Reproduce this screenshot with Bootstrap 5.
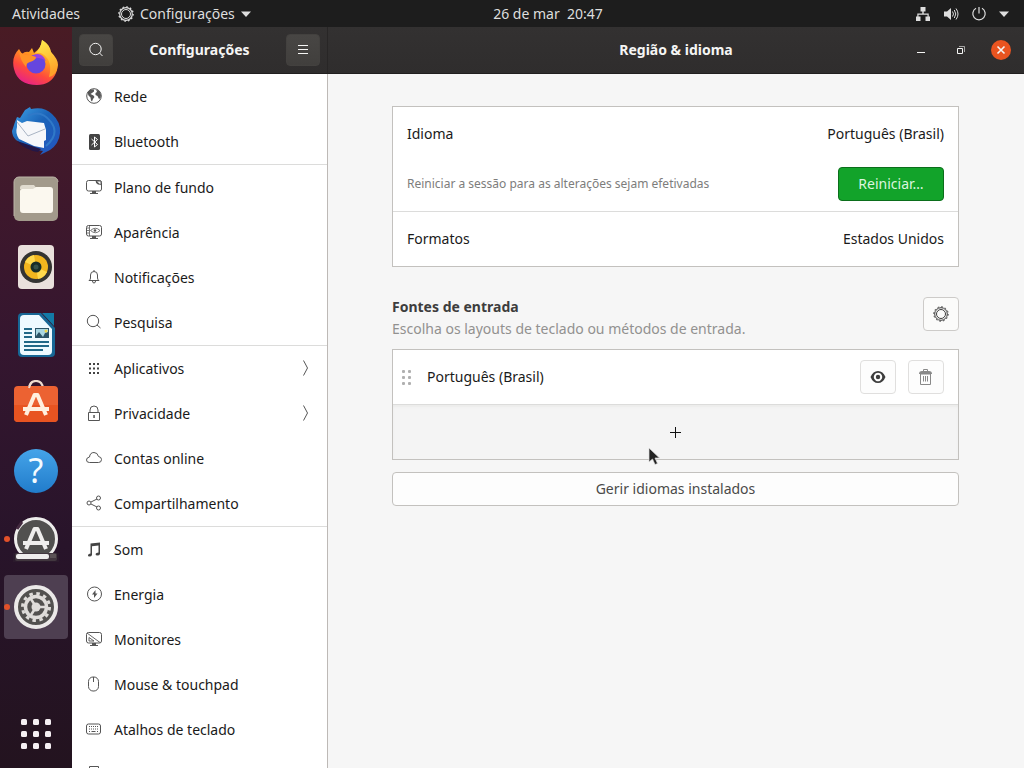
<!DOCTYPE html>
<html lang="pt-BR">
<head>
<meta charset="utf-8">
<meta name="viewport" content="width=device-width, initial-scale=1">
<title>Configurações</title>
<link href="https://cdn.jsdelivr.net/npm/bootstrap@5.3.0/dist/css/bootstrap.min.css" rel="stylesheet">
<style>
body{font-family:"Noto Sans","Open Sans",sans-serif;font-size:14px;line-height:20px;color:#1a1a1a;background:#f6f6f6}
button{color:inherit;font:inherit}
svg{display:block;flex:none}
.sym{fill:none;stroke:currentColor;stroke-width:1}
.topbar{display:grid;grid-template-columns:72px 1fr auto 1fr;height:27px;background:#1d1d1d;color:#dedede;white-space:nowrap}
.topbar button{display:flex;align-items:center;background:none;border:0;padding:0}
.activities{margin-left:12px}
.appmenu{margin-left:46px;gap:6px}
.topbar .tray{gap:12px;padding-right:15px}
.dock{width:72px;background:linear-gradient(#491b24 0,#43192a 14%,#35162f 42%,#28142a 70%,#23131f 100%);gap:4px;padding:4px 0 2px}
.dock button{position:relative;width:64px;height:64px;padding:0;border:0;background:none;border-radius:4px;display:grid;place-items:center}
.dock button.current{background:#4e3f51}
.running::before{content:"";position:absolute;left:0;top:29px;width:6px;height:6px;border-radius:50%;background:#e2512a}
.settings-side{width:256px}
.side-list{border-right:1px solid #bdb9b6}
.titlebar{height:47px;background:linear-gradient(#333131,#2f2d2d);border-bottom:1px solid #211f1f;color:#f5f5f4;font-weight:700}
.titlebar h1,.titlebar h2{font-size:14px;line-height:20px;font-weight:700;margin:0}
.side-title{border-right:1px solid #282626;padding:0 7px}
.hbtn{width:34px;height:32px;border:1px solid #43413f;border-radius:4px;background:linear-gradient(#484644,#413f3d);display:grid;place-items:center;padding:0}
.main-title{display:grid;grid-template-columns:1fr auto 1fr;padding:0 13px}
.winbtn{border:0;background:none;width:20px;height:20px;padding:0;display:grid;place-items:center}
.closebtn{background:#e95420;border-radius:50%}
.menu-group{border-bottom:1px solid #dcdcdb}
.menu-group a{display:flex;align-items:center;height:45px;padding:0 13px 0 14px;gap:12px;color:#1a1a1a;text-decoration:none}
.menu-group .sym{color:#555;margin-bottom:1px}
.page{padding:32px 65px 0 64px}
.panel{border:1px solid #c3c1be;background:#fff}
.line{height:54px;padding:0 14px}
.restart{padding:6px 14px 10px;color:#7d7d7c;font-size:12px}
.btn-restart{width:106px;height:34px;background:#12a32a;border:1px solid #0b6e1b;border-radius:4px;color:#dcf5df;font-size:14px}
.rule{border-top:1px solid #dcdcdb}
.section-head{margin-top:30px;height:52px}
.section-head h3{font-size:14px;line-height:20px;font-weight:700;color:#3d3d3d;margin:0 0 2px}
.section-head p{color:#929190;margin:0}
.ibtn{width:36px;height:34px;border:1px solid #cdcbc9;border-radius:4px;background:#fbfbfa;color:#3d3d3d;display:grid;place-items:center;padding:0}
.source .ibtn{border-color:#e0dfde;background:#fdfdfd}
.source{height:54px;padding:0 14px 0 8px}
.addsource{width:100%;height:55px;background:#f4f4f4;border:0;border-top:1px solid #dcdcdb;box-shadow:inset 0 2px 2px #ececeb;display:grid;place-items:center;padding:0;color:#111}
.pointer{position:absolute;left:calc(50% - 28px);top:97px;pointer-events:none}
.manage{margin-top:12px;height:34px;border:1px solid #c3c1be;border-radius:4px;background:#fdfdfd;color:#4a4a49;padding:0;width:100%}
</style>
</head>
<body>
<div class="vh-100 d-flex flex-column overflow-hidden">
  <header class="topbar flex-shrink-0">
    <button class="activities">Atividades</button>
    <button class="appmenu">
      <svg class="sym" width="16" height="16" viewBox="0 0 16 16"><circle cx="8" cy="8" r="6.300" stroke-width="1.200"/><circle cx="8" cy="8" r="4.500"/><circle cx="8" cy="8" r="7.200" stroke-width="1.200" stroke-dasharray="1.700 2.070"/></svg>
      Configurações
      <svg width="10" height="6" viewBox="0 0 10 6"><path d="M0 .5h10L5 6z" fill="currentColor"/></svg>
    </button>
    <button>26 de mar&nbsp; 20:47</button>
    <button class="tray justify-content-end" aria-label="Sistema">
      <svg width="16" height="16" viewBox="0 0 16 16"><path d="M5.500 1h5v4.500H8.700v2h5v3H15V15h-4.500v-4.500h2V8.700h-9v1.800h2V15H1v-4.500h1.300v-3h5v-2H5.500z" fill="currentColor"/></svg>
      <svg width="16" height="16" viewBox="0 0 16 16"><path d="M1 5.500h3L8 2v12L4 10.500H1z" fill="currentColor"/><path d="M9.500 5.500q2 2.500 0 5M11.300 4q3 4 0 8M13 2.500q4 5.500 0 11" class="sym"/></svg>
      <svg class="sym" width="16" height="16" viewBox="0 0 16 16"><path d="M5 2.300a6.200 6.200 0 1 0 6 0M8 1v6.500" stroke-width="1.200"/></svg>
      <svg width="10" height="6" viewBox="0 0 10 6"><path d="M0 .5h10L5 6z" fill="currentColor"/></svg>
    </button>
  </header>
  <div class="d-flex flex-grow-1" style="min-height:0">
    <nav class="dock d-flex flex-column align-items-center flex-shrink-0" aria-label="Dock">
      <button aria-label="Firefox"><svg width="48" height="48" viewBox="0 0 48 48"><defs><linearGradient id="ff" x1=".8" y1="0" x2=".3" y2="1"><stop offset="0" stop-color="#ffe14a"/><stop offset=".4" stop-color="#ff9a1f"/><stop offset=".7" stop-color="#ff4a3c"/><stop offset="1" stop-color="#e5208b"/></linearGradient><linearGradient id="fy" x1="0" y1="0" x2=".3" y2="1"><stop offset="0" stop-color="#fff04f"/><stop offset="1" stop-color="#ffa229"/></linearGradient></defs><path d="M7 10l3 5q3-3 7-2l3-4 2 5q4-3 6-6 2-4 2-7 7 4 8 10l2 4q8 10 4 19-5 12-19 12Q6 46 2 30-1 18 7 10z" fill="url(#ff)"/><path d="M30 1q8 5 9 12 7 7 7 13-1 10-9 12Q41 23 32 16q-5-4-9-1 6-6 7-14z" fill="url(#fy)"/><circle cx="24" cy="25" r="9.500" fill="#6546df"/><path d="M20 17q9-6 14 5-6-5-12-2z" fill="#9a42e0"/><path d="M7 12q5 5 11 4l6 2q0 3-6 5-4 1-4 5-6-7-7-16z" fill="#ff9227"/></svg></button>
      <button aria-label="Thunderbird"><svg width="50" height="50" viewBox="0 0 50 50"><defs><linearGradient id="tb" x1="0" y1="0" x2="1" y2="1"><stop offset="0" stop-color="#3fa4e8"/><stop offset=".45" stop-color="#1b63b8"/><stop offset="1" stop-color="#2454c0"/></linearGradient></defs><path d="M14 4l5-3 1 2q13-3 21 5 9 8 8 19-1 11-10 17l-10 5 3-4-12-2L5 34Q1 30 1 25l2-6 1-3 2-5 3 1z" fill="url(#tb)"/><path d="M17 10q13-7 23 6 9 12-5 24" fill="none" stroke="#3079c8" stroke-width="2"/><path d="M6 14l5 3 5-2 17 2 2 7v10l-2 1v7l-10-2-15-7q-4-6-2-12z" fill="#f6f7fa"/><path d="M6 16l11 14 17-7" fill="none" stroke="#a9b4c4"/><path d="M6 35l24 8-3 3Q14 44 6 35z" fill="#241747"/></svg></button>
      <button aria-label="Arquivos"><svg width="46" height="46" viewBox="0 0 46 46"><rect x="1" y="1" width="44" height="44" rx="5" fill="#a29a8b"/><path d="M1 40V6a5 5 0 0 1 5-5h34a5 5 0 0 1 5 5" fill="none" stroke="#bbb4a7"/><path d="M7 12q0-3 3-3h11l3 4H7z" fill="#e0dbcf"/><path d="M7 15q0-2 2-2h11l3-2h14q3 0 3 3v20q0 3-3 3H10q-3 0-3-3z" fill="#fbf8ef"/></svg></button>
      <button aria-label="Rhythmbox"><svg width="46" height="46" viewBox="0 0 46 46"><rect x="5" y="1" width="36" height="44" rx="4" fill="#e9e0dc"/><circle cx="23" cy="23" r="16" fill="#343432"/><circle cx="23" cy="23" r="12" fill="#f2b61e"/><path d="M23 23L12 18q3-6 9-7zM23 23l11 5q-3 6-9 7z" fill="#ffd94d"/><circle cx="23" cy="23" r="5.500" fill="#182d28"/><circle cx="23" cy="23" r="2.500" fill="#35514a"/></svg></button>
      <button aria-label="LibreOffice Writer"><svg width="46" height="46" viewBox="0 0 46 46"><path d="M9 1h19l14 15v25a4 4 0 0 1-4 4H9a4 4 0 0 1-4-4V5a4 4 0 0 1 4-4z" fill="#176795"/><path d="M11 3h15l13 14v22a4 4 0 0 1-4 4H11a4 4 0 0 1-4-4V7a4 4 0 0 1 4-4z" fill="#eefaff"/><path d="M29 1h12v13z" fill="#137ba7"/><path d="M11 17h8M11 21h8M11 25h8M11 30h25M11 34h25M11 38h19" stroke="#216887" stroke-width="2"/><path d="M22 16h14v10H22z" fill="#2b5366"/><path d="M23 17h12v3l-3 1-2 4-4-5-3 4z" fill="#a8d6e2"/><circle cx="33" cy="19" r="1.500" fill="#f0d447"/></svg></button>
      <button aria-label="Ubuntu Software"><svg width="46" height="46" viewBox="0 0 46 46"><path d="M16 8q1-7 7-7t7 7" fill="none" stroke="#efdccf" stroke-width="2.200"/><rect x="1" y="6" width="44" height="36" rx="4" fill="#ec6232"/><path d="M1 25h44v13a4 4 0 0 1-4 4H5a4 4 0 0 1-4-4z" fill="#e85421"/><path d="M16 8q1-4 3-6" fill="none" stroke="#efdccf" stroke-width="2"/><path d="M13 35l8.500-20h3L33 35M10 29h26" fill="none" stroke="#fff0df" stroke-width="4" stroke-linejoin="round"/></svg></button>
      <button aria-label="Ajuda"><svg width="46" height="46" viewBox="0 0 46 46"><defs><linearGradient id="hp" x2="0" y2="1"><stop stop-color="#45a4e9"/><stop offset="1" stop-color="#217ccb"/></linearGradient></defs><circle cx="23" cy="23" r="22" fill="url(#hp)"/><text x="23" y="35" text-anchor="middle" font-size="34" fill="#f4fbff">?</text></svg></button>
      <button class="running" aria-label="Atualizador"><svg width="46" height="46" viewBox="0 0 46 46"><circle cx="23" cy="23" r="20.500" fill="#51504f" stroke="#eeedec" stroke-width="3"/><path d="M4 13l5-7" stroke="#43293f" stroke-width="3"/><path d="M13 33l8.500-20h3L33 33M10 27h26" fill="none" stroke="#efeeed" stroke-width="4" stroke-linejoin="round"/><rect x="0" y="37" width="46" height="9" fill="#2b1a2c"/><rect x="2" y="37" width="42" height="8" rx="2" fill="#42373f"/><rect x="3" y="38" width="33" height="5" rx="2" fill="#eeedec"/><path d="M37 38h6v4h-6z" fill="#5b5256"/></svg></button>
      <button class="running current" aria-label="Configurações"><svg width="46" height="46" viewBox="0 0 46 46"><circle cx="23" cy="23" r="20" fill="#52514f" stroke="#ebe9e8" stroke-width="4"/><g fill="none" stroke="#dedcd9"><circle cx="23" cy="23" r="10.500" stroke-width="3.500"/><circle cx="23" cy="23" r="13.500" stroke-width="3" stroke-dasharray="3.500 3.560"/><path d="M23 23h9M23 23l-5-8M23 23l-5 8" stroke-width="2.500"/></g><circle cx="23" cy="23" r="4.500" fill="#dedcd9"/></svg></button>
      <button class="mt-auto" aria-label="Mostrar aplicativos"><svg width="30" height="30" viewBox="0 0 30 30" fill="#f5eff3"><g id="dots"><rect width="6" height="6" rx="1.500"/><rect x="12" width="6" height="6" rx="1.500"/><rect x="24" width="6" height="6" rx="1.500"/></g><use href="#dots" y="12"/><use href="#dots" y="24"/></svg></button>
    </nav>
    <aside class="settings-side d-flex flex-column flex-shrink-0 bg-white">
      <div class="titlebar side-title d-flex align-items-center justify-content-between flex-shrink-0">
        <button class="hbtn" aria-label="Pesquisar"><svg class="sym" width="16" height="16" viewBox="0 0 16 16"><circle cx="7.500" cy="7" r="5.700"/><path d="M11.500 11l3 3"/></svg></button>
        <h1>Configurações</h1>
        <button class="hbtn" aria-label="Menu"><svg class="sym" width="16" height="16" viewBox="0 0 16 16"><path d="M3 3.500h10M3 7.500h10M3 11.500h10"/></svg></button>
      </div>
      <nav class="side-list overflow-hidden flex-grow-1" aria-label="Painéis">
        <div class="menu-group">
          <a href="#"><svg class="sym" width="16" height="16" viewBox="0 0 16 16"><circle cx="8" cy="8" r="7.300"/><path d="M1.500 4.500l3-3 3.500 0 0 2-2 1.500-1.500 1 3 1.500 1 1.500-1.500 2-1 2.500-1-1-.5-3-2-2zM10 1.500l3.500 1.500 1.500 4-.5 3-1.500 1-1.500-3-2-1 0-2 1.500-1z" fill="currentColor" stroke="none"/></svg>Rede</a>
          <a href="#"><svg width="16" height="16" viewBox="0 0 16 16"><rect x="3" width="11" height="16" rx="1.500" fill="#444"/><path d="M5.500 5l6 5.500L8.500 13V3l3 2.500-6 5.500" fill="none" stroke="#fff"/></svg>Bluetooth</a>
        </div>
        <div class="menu-group">
          <a href="#"><svg class="sym" width="16" height="16" viewBox="0 0 16 16"><rect x=".5" y="1.500" width="15" height="10.500" rx="2"/><path d="M9.500 1.500h5l1 1v4q-1-1-3.500-1-2.500-1-2.500-4zM6 12h4v2h2v1H4v-1h2z" fill="currentColor" stroke="none"/><path d="M11 2.500h3.500v3z" fill="#fff" stroke="none"/></svg>Plano de fundo</a>
          <a href="#"><svg class="sym" width="16" height="16" viewBox="0 0 16 16"><rect x=".5" y="1.500" width="15" height="10.500" rx="2"/><path d="M3.500 1.500V12M1 4h2M1 6.500h2M1 9h2M4.500 6.500q5-4.500 9.500 0-4.500 4.500-9.500 0z" stroke-width=".8"/><circle cx="9" cy="6.500" r="1.300" fill="currentColor" stroke="none"/><path d="M6 12h4v2h2v1H4v-1h2z" fill="currentColor" stroke="none"/></svg>Aparência</a>
          <a href="#"><svg class="sym" width="16" height="16" viewBox="0 0 16 16"><path d="M3 11.500h10q-1.500-1-1.500-2.500V6q0-3.500-3.500-3.500T4.500 6v3q0 1.500-1.500 2.500zM8 1v1.500M6.500 12q0 2 1.500 2t1.500-2"/></svg>Notificações</a>
          <a href="#"><svg class="sym" width="16" height="16" viewBox="0 0 16 16"><circle cx="7" cy="7" r="5.700"/><path d="M11 11l3.500 3"/></svg>Pesquisa</a>
        </div>
        <div class="menu-group">
          <a href="#"><svg width="16" height="16" viewBox="0 0 16 16"><path d="M3 3h10M3 7.500h10M3 12h10" stroke="#444" stroke-width="2" stroke-dasharray="2 2"/></svg>Aplicativos<svg class="sym ms-auto" width="16" height="16" viewBox="0 0 16 16"><path d="M5.500.5l4 7.500-4 7.500"/></svg></a>
          <a href="#"><svg class="sym" width="16" height="16" viewBox="0 0 16 16"><path d="M2.500 7.500h11v8h-11zM4 7.500V5q0-4 4-4t4 4v2.500"/><path d="M7.300 10h1.500v3H7.300z" fill="currentColor" stroke="none"/></svg>Privacidade<svg class="sym ms-auto" width="16" height="16" viewBox="0 0 16 16"><path d="M5.500.5l4 7.500-4 7.500"/></svg></a>
          <a href="#"><svg class="sym" width="16" height="16" viewBox="0 0 16 16"><path d="M3.500 12.500q-3 0-3-2.500 0-2.500 3-3 .5-4.500 4.500-4.500 3.500 0 4.500 4 3 .5 3 3 0 3-3 3z"/></svg>Contas online</a>
          <a href="#"><svg class="sym" width="16" height="16" viewBox="0 0 16 16"><circle cx="3" cy="8" r="2"/><circle cx="12.500" cy="3" r="2"/><circle cx="12.500" cy="13" r="2"/><path d="M5 7l6-3M5 9l6 3"/></svg>Compartilhamento</a>
        </div>
        <div class="menu-group">
          <a href="#"><svg width="16" height="16" viewBox="0 0 16 16"><path d="M4.500 1.500L14 .5v11.500q-.5 1.500-2.500 1.500T9.500 12q.5-1.500 3-1.500V3.500L6 4.200V13q-.5 1.500-2.500 1.500T2 13q.5-1.500 2.500-1.500z" fill="#444"/></svg>Som</a>
          <a href="#"><svg class="sym" width="16" height="16" viewBox="0 0 16 16"><circle cx="8.500" cy="8" r="7"/><path d="M9.500 4L6 8.500h2v3.500l3.500-4.500H9.500z" fill="currentColor" stroke="none"/></svg>Energia</a>
          <a href="#"><svg class="sym" width="16" height="16" viewBox="0 0 16 16"><rect x=".5" y="1.500" width="15" height="10.500" rx="2"/><path d="M1 2l13 9.500M3 6.500V10h5z" stroke-width=".9"/><path d="M6 12h4v2h2v1H4v-1h2z" fill="currentColor" stroke="none"/></svg>Monitores</a>
          <a href="#"><svg class="sym" width="16" height="16" viewBox="0 0 16 16"><rect x="2.500" y="1" width="10" height="14" rx="4.500"/><path d="M7.500 1v5"/></svg>Mouse &amp; touchpad</a>
          <a href="#"><svg class="sym" width="16" height="16" viewBox="0 0 16 16"><rect x=".5" y="3" width="14" height="10" rx="2"/><path d="M3 5.500h9.500M3 8h9.500" stroke-dasharray="1 1"/><path d="M3 10.500h1M5.500 10.500h4M11 10.500h1"/></svg>Atalhos de teclado</a>
          <a href="#" aria-label="Impressoras"><svg class="sym" width="16" height="16" viewBox="0 0 16 16"><path d="M3.500 6V.5h9V6M1 6h14v7H1z"/></svg></a>
        </div>
      </nav>
    </aside>
    <main class="flex-grow-1 d-flex flex-column" style="min-width:0">
      <div class="titlebar main-title align-items-center flex-shrink-0">
        <span></span>
        <h2>Região &amp; idioma</h2>
        <div class="d-flex justify-content-end" style="gap:20px">
          <button class="winbtn" aria-label="Minimizar"><svg class="sym" width="16" height="16" viewBox="0 0 16 16"><path d="M4 10.500h8"/></svg></button>
          <button class="winbtn" aria-label="Restaurar"><svg class="sym" width="16" height="16" viewBox="0 0 16 16"><path d="M4.500 6.500h5v5h-5z"/><path d="M6 4.500h5.500V10" opacity=".6"/></svg></button>
          <button class="winbtn closebtn" aria-label="Fechar"><svg class="sym" width="16" height="16" viewBox="0 0 16 16"><path d="M4.500 4.500l7 7m0-7l-7 7" stroke-width="1.600"/></svg></button>
        </div>
      </div>
      <div class="page">
        <section class="panel">
          <div class="line d-flex align-items-center justify-content-between"><span>Idioma</span><span>Português (Brasil)</span></div>
          <div class="restart d-flex align-items-center justify-content-between"><span>Reiniciar a sessão para as alterações sejam efetivadas</span><button class="btn-restart">Reiniciar…</button></div>
          <div class="rule"><div class="line d-flex align-items-center justify-content-between"><span>Formatos</span><span>Estados Unidos</span></div></div>
        </section>
        <div class="section-head d-flex justify-content-between">
          <div><h3>Fontes de entrada</h3><p>Escolha os layouts de teclado ou métodos de entrada.</p></div>
          <button class="ibtn" aria-label="Opções"><svg class="sym" width="16" height="16" viewBox="0 0 16 16"><circle cx="8" cy="8" r="6.300"/><circle cx="8" cy="8" r="4.500"/><circle cx="8" cy="8" r="7.200" stroke-dasharray="1.700 2.070"/></svg></button>
        </div>
        <section class="panel position-relative">
          <div class="source d-flex align-items-center">
            <svg width="12" height="16" viewBox="0 0 12 16" fill="#b0b0b0"><rect x="1" y="1" width="3" height="3" rx="1"/><rect x="7" y="1" width="3" height="3" rx="1"/><rect x="1" y="7" width="3" height="3" rx="1"/><rect x="7" y="7" width="3" height="3" rx="1"/><rect x="1" y="13" width="3" height="3" rx="1"/><rect x="7" y="13" width="3" height="3" rx="1"/></svg>
            <span class="flex-grow-1" style="padding-left:14px">Português (Brasil)</span>
            <div class="d-flex" style="gap:12px">
              <button class="ibtn" aria-label="Visualizar"><svg width="16" height="16" viewBox="0 0 16 16"><path fill-rule="evenodd" d="M.5 8Q3 2 8 2t7.500 6Q13 14 8 14T.5 8zM8 3.800a4.200 4.200 0 1 0 .01 0z" fill="currentColor"/><circle cx="8" cy="8" r="2.200" fill="currentColor"/></svg></button>
              <button class="ibtn" aria-label="Remover"><svg class="sym" width="16" height="16" viewBox="0 0 16 16" opacity=".6"><path d="M2.500 5h10v10.500h-10zM5.500 7v5.500M7.500 7v5.500M9.500 7v5.500M5.500 2V.5h4V2"/><path d="M1 5q0-3 3-3h7q3 0 3 3z" fill="currentColor" stroke="none"/></svg></button>
            </div>
          </div>
          <button class="addsource" aria-label="Adicionar fonte"><svg class="sym" width="12" height="12" viewBox="0 0 12 12"><path d="M0 6.500h11M5.500 1v11"/></svg></button>
          <svg class="pointer" width="14" height="20" viewBox="0 0 14 20"><path d="M1 1v14l3.500-3 2.500 5.500 2.500-1L7 11h4.500z" fill="#222" stroke="#ddd" stroke-width=".7"/></svg>
        </section>
        <button class="manage">Gerir idiomas instalados</button>
      </div>
    </main>
  </div>
</div>
<script src="https://cdn.jsdelivr.net/npm/bootstrap@5.3.0/dist/js/bootstrap.bundle.min.js"></script>
</body>
</html>
